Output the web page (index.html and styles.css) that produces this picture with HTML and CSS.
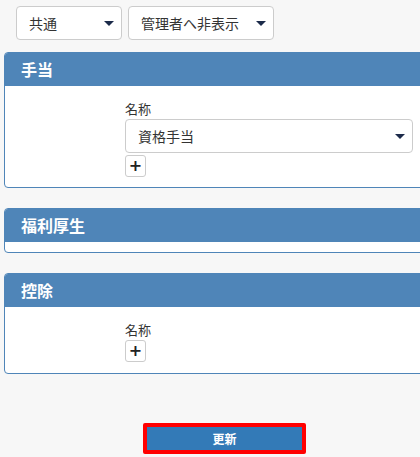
FILE: index.html
```html
<!DOCTYPE html>
<html lang="ja">
<head>
    <meta charset="UTF-8">
    <meta name="viewport" content="width=device-width, initial-scale=1.0">
    <title>手当設定</title>
    <link rel="stylesheet" href="styles.css">
</head>
<body>
    <div class="filters">
        <div class="select select-small">共通<span class="caret"></span></div>
        <div class="select select-mid">管理者へ非表示<span class="caret"></span></div>
    </div>

    <div class="panel">
        <div class="panel-heading">手当</div>
        <div class="panel-body">
            <div class="field">
                <label>名称</label>
                <div class="select select-wide">資格手当<span class="caret"></span></div>
                <button class="add-btn" type="button">+</button>
            </div>
        </div>
    </div>

    <div class="panel">
        <div class="panel-heading">福利厚生</div>
        <div class="panel-body empty"></div>
    </div>

    <div class="panel">
        <div class="panel-heading">控除</div>
        <div class="panel-body">
            <div class="field">
                <label>名称</label>
                <button class="add-btn tight" type="button">+</button>
            </div>
        </div>
    </div>

    <div class="actions">
        <button class="update-btn" type="button">更新</button>
    </div>
</body>
</html>
```

FILE: styles.css
```css
* {
    margin: 0;
    padding: 0;
    box-sizing: border-box;
}
html {
    overflow: hidden;
}
body {
    font-family: "Noto Sans CJK JP", "Noto Sans", sans-serif;
    font-size: 13px;
    color: #333;
    background-color: #f7f7f7;
    padding-top: 6px;
}
.filters {
    display: flex;
    gap: 6px;
    padding-left: 16px;
}
.select {
    position: relative;
    height: 34px;
    line-height: 32px;
    background: #fff;
    border: 1px solid #ccc;
    border-radius: 4px;
    padding-left: 12px;
    font-size: 14px;
    color: #333;
}
.select-small {
    width: 106px;
}
.select-mid {
    width: 146px;
}
.select-wide {
    width: 288px;
    margin-top: 1px;
}
.caret {
    position: absolute;
    right: 7px;
    top: 14px;
    width: 0;
    height: 0;
    border-left: 5px solid transparent;
    border-right: 5px solid transparent;
    border-top: 5px solid #1c2b4a;
}
.panel {
    width: 441px;
    margin: 6px 0 20px 4px;
    background: #fff;
    border: 1px solid #4f85b8;
    border-radius: 4px;
    overflow: hidden;
}
.filters + .panel {
    margin-top: 12px;
}
.panel-heading {
    height: 33px;
    line-height: 33px;
    background: #4f85b8;
    color: #fff;
    font-weight: bold;
    font-size: 16px;
    padding-left: 16px;
}
.panel-body {
    padding: 14px 0 10px 120px;
}
.panel-body.empty {
    padding: 0;
    height: 10px;
}
.field label {
    display: block;
    line-height: 18px;
    font-size: 13px;
}
.add-btn {
    display: block;
    width: 21px;
    height: 22px;
    margin-top: 2px;
    background: #fff;
    border: 1px solid #ccc;
    border-radius: 3px;
    font-family: "DejaVu Sans", sans-serif;
    font-weight: bold;
    font-size: 16px;
    line-height: 18px;
    color: #222;
}
.add-btn.tight {
    margin-top: 1px;
    margin-bottom: 1px;
}
.actions {
    width: 441px;
    margin-left: 4px;
    padding-top: 29px;
    text-align: center;
}
.update-btn {
    width: 163px;
    height: 31px;
    background: #337ab7;
    border: 4px solid #ff0000;
    border-radius: 2px;
    color: #fff;
    font-family: "Noto Sans CJK JP", sans-serif;
    font-weight: bold;
    font-size: 12px;
}
```
